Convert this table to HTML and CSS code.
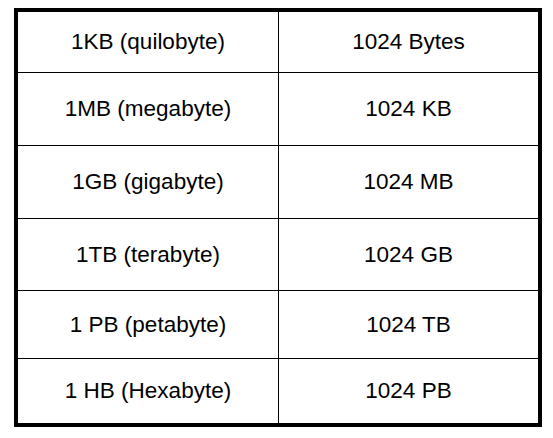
FILE: index.html
```html
<!DOCTYPE html>
<html>
<head>
<meta charset="utf-8">
<link rel="stylesheet" href="styles.css">
</head>
<body>
<div class="units">
  <div class="cell left">1KB (quilobyte)</div><div class="cell right">1024 Bytes</div>
  <div class="cell left">1MB (megabyte)</div><div class="cell right">1024 KB</div>
  <div class="cell left">1GB (gigabyte)</div><div class="cell right">1024 MB</div>
  <div class="cell left">1TB (terabyte)</div><div class="cell right">1024 GB</div>
  <div class="cell left">1 PB (petabyte)</div><div class="cell right">1024 TB</div>
  <div class="cell left last">1 HB (Hexabyte)</div><div class="cell right last">1024 PB</div>
</div>
</body>
</html>
```
FILE: styles.css
```css
html, body {
  margin: 0;
  padding: 0;
  background: #fff;
}
.units {
  margin: 8px 0 0 14px;
  width: 520px;
  border: 4px solid #000;
  display: grid;
  grid-template-columns: 261px 259px;
  grid-template-rows: 61px 73px 73px 72px 68px 64px;
  font-family: "Liberation Sans", Arial, sans-serif;
  font-size: 22.5px;
  color: #000;
}
.cell {
  box-sizing: border-box;
  display: flex;
  align-items: center;
  justify-content: center;
  border-bottom: 1px solid #000;
  white-space: nowrap;
}
.left {
  border-right: 1px solid #000;
}
.last {
  border-bottom: none;
}
```
